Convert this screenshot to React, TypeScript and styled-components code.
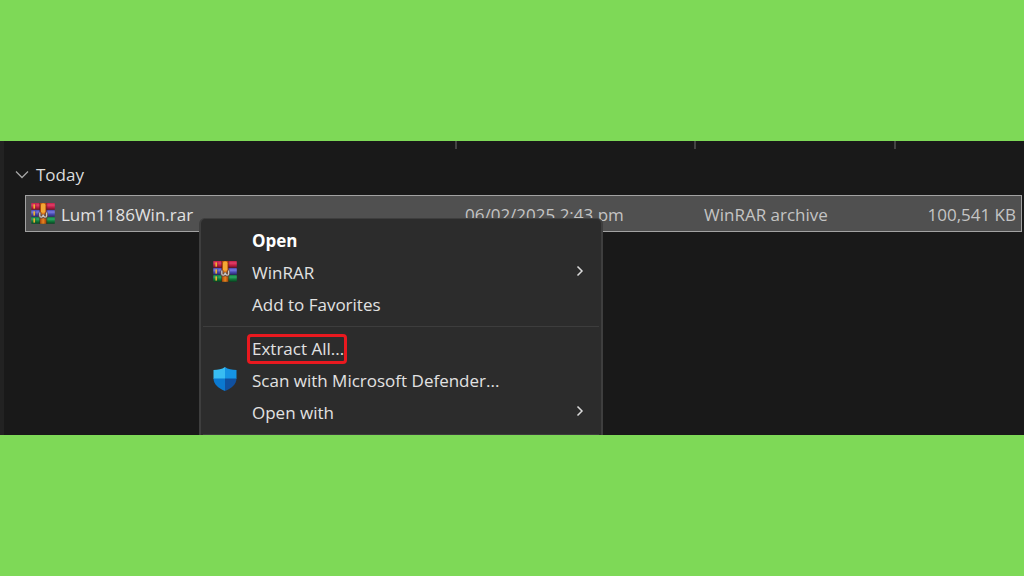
import React from 'react';
import styled, { createGlobalStyle } from 'styled-components';

const GlobalStyle = createGlobalStyle`
  * { box-sizing: border-box; }
  body {
    margin: 0;
    background: #7ed957;
    font-family: "Segoe UI", "Open Sans", "Noto Sans", sans-serif;
    font-size: 17px;
    line-height: 24px;
  }
`;

const Page = styled.main`
  min-height: 100vh;
  display: flex;
  flex-direction: column;
  justify-content: center;
`;

const Explorer = styled.section`
  background: #191919;
  border-left: 4px solid #222222;
  color: #d8d8d8;
  overflow: hidden;
`;

const FileTable = styled.table`
  display: block;
  width: 100%;

  thead, tbody { display: block; }
  th, td { padding: 0; font-weight: 400; text-align: left; white-space: nowrap; }
`;

const Columns = styled.tr`
  display: grid;
  grid-template-columns: minmax(0, 1fr) 239px 200px 130px;
`;

const HeaderCell = styled.th`
  height: 8px;

  & + & { border-left: 2px solid #434343; }
`;

const GroupRow = styled.tr`
  display: block;
  padding: 14px 0 8px 11px;
`;

const GroupCell = styled.th`
  display: block;
`;

const GroupToggle = styled.button`
  display: flex;
  align-items: center;
  gap: 7px;
  padding: 0;
  border: 0;
  background: none;
  color: #dcdcdc;
  font: inherit;
`;

const FileRow = styled(Columns)`
  height: 37px;
  margin: 0 2px 0 21px;
  border: 1px solid #a2a2a2;
  background: #505050;
  align-items: center;
  grid-template-columns: minmax(0, 1fr) 239px 199px 118px;
`;

const Cell = styled.td<{ $align?: 'right' }>`
  && {
    padding: 3px 5px 0 0;
    text-align: ${(p) => p.$align ?? 'left'};
  }
  color: #c4c4c4;
`;

const NameCell = styled(Cell)`
  display: flex;
  align-items: center;
  gap: 6px;
  && { padding-left: 5px; }
  color: #e2e2e2;
`;

const IconSlot = styled.span`
  display: block;
  padding-bottom: 4px;
`;

const Menu = styled.div`
  position: relative;
  width: 404px;
  margin: -14px 0 0 195px;
  padding: 6px 4px 0;
  border: 1px solid #3e3e3e;
  border-width: 1px 2px 0;
  border-radius: 6px 6px 0 0;
  background: #2c2c2c;
`;

const MenuItem = styled.button<{ $bold?: boolean }>`
  display: grid;
  grid-template-columns: 24px 1fr 10px;
  column-gap: 15px;
  align-items: center;
  width: 100%;
  height: 32px;
  padding: 0 12px 0 8px;
  border: 0;
  background: none;
  color: ${(p) => (p.$bold ? '#ffffff' : '#e2e2e2')};
  font: inherit;
  font-weight: ${(p) => (p.$bold ? 700 : 400)};
  text-align: left;
  white-space: nowrap;
`;

const Icon = styled.svg`
  display: block;
  flex: none;
`;

const Label = styled.span`
  justify-self: start;
`;

const Highlight = styled(Label)`
  margin: -3px -5px;
  padding: 0 0 0 2px;
  border: 3px solid #e9191f;
  border-radius: 4px;
`;

const Separator = styled.hr`
  height: 1px;
  margin: 5px -2px 6px;
  border: 0;
  background: #3d3d3d;

  &:last-child { margin-bottom: 0; }
`;

function ArchiveIcon({ id }: { id: string }) {
  const books = [
    { y: 0, light: '#e2406a', base: '#c41f48', dark: '#701029' },
    { y: 7, light: '#7a7be0', base: '#4a4bb4', dark: '#28286c' },
    { y: 14, light: '#2fa866', base: '#117d3c', dark: '#064520' },
  ];
  return (
    <Icon width="24" height="21" viewBox="0 0 24 21" aria-hidden="true">
      <defs>
        {books.map((b, i) => (
          <linearGradient key={b.y} id={`${id}-book${i}`} x1="0" y1="0" x2="0" y2="1">
            <stop offset="0" stopColor={b.base} />
            <stop offset="0.3" stopColor={b.light} />
            <stop offset="0.6" stopColor={b.base} />
            <stop offset="1" stopColor={b.dark} />
          </linearGradient>
        ))}
        <linearGradient id={`${id}-strap`} x1="0" y1="0" x2="1" y2="0">
          <stop offset="0" stopColor="#a8480c" />
          <stop offset="0.5" stopColor="#e88420" />
          <stop offset="1" stopColor="#a03c06" />
        </linearGradient>
      </defs>
      {books.map((b, i) => (
        <g key={b.y}>
          <rect x="0.3" y={b.y} width="23.5" height="6.8" rx="0.6" fill={`url(#${id}-book${i})`} />
          <rect x="2.4" y={b.y + 1.4} width="1.7" height="4.2" fill="#efb22c" />
          <rect x="4.4" y={b.y + 0.8} width="0.8" height="5.2" fill={b.dark} opacity="0.5" />
        </g>
      ))}
      <rect x="9" y="0" width="6.4" height="20.8" fill={`url(#${id}-strap)`} />
      <path d="M8.600 0v21M15.800 0v21" stroke="#4b1c16" strokeWidth="0.8" opacity="0.6" />
      <rect x="10" y="0.8" width="4.4" height="9" rx="1.4" fill="#f3a935" />
      <path d="M8.800 9.500v3.200q0 1.500 1.500 1.500t1.900-2.700q.4 2.700 1.900 2.700t1.500-1.500V9.500" fill="none" stroke="#5d4740" strokeWidth="2.800" />
      <path d="M8.800 9.500v3.200q0 1.500 1.500 1.500t1.900-2.700q.4 2.700 1.900 2.700t1.500-1.500V9.500" fill="none" stroke="#cbc5c0" strokeWidth="1.300" />
    </Icon>
  );
}

function ShieldIcon() {
  return (
    <Icon width="24" height="26" viewBox="0 0 24 26" aria-hidden="true">
      <path d="M12 1C9 3.200 5 4 .5 4v9H12z" fill="#38bdf2" />
      <path d="M12 1c3 2.200 7 3 11.500 3v9H12z" fill="#1594e4" />
      <path d="M.5 12.500c.3 6 5 10 11.500 12.500V12.500z" fill="#0b79d0" />
      <path d="M23.500 12.500c-.3 6-5 10-11.500 12.500V12.500z" fill="#10509f" />
    </Icon>
  );
}

function SubmenuArrow() {
  return (
    <Icon width="10" height="12" viewBox="0 0 10 12" aria-hidden="true">
      <path d="M2.500 1.500 7 6l-4.500 4.500" fill="none" stroke="#dadada" strokeWidth="1.500" />
    </Icon>
  );
}

type Entry = {
  label: string;
  icon?: React.ReactNode;
  bold?: boolean;
  submenu?: boolean;
  highlighted?: boolean;
};

const groups: Entry[][] = [
  [
    { label: 'Open', bold: true },
    { label: 'WinRAR', icon: <ArchiveIcon id="menu" />, submenu: true },
    { label: 'Add to Favorites' },
  ],
  [
    { label: 'Extract All...', highlighted: true },
    { label: 'Scan with Microsoft Defender...', icon: <ShieldIcon /> },
    { label: 'Open with', submenu: true },
  ],
];

export default function App() {
  return (
    <Page>
      <GlobalStyle />
      <Explorer>
        <FileTable>
          <thead>
            <Columns>
              <HeaderCell />
              <HeaderCell />
              <HeaderCell />
              <HeaderCell />
            </Columns>
          </thead>
          <tbody>
            <GroupRow>
              <GroupCell colSpan={4}>
                <GroupToggle type="button">
                  <Icon width="14" height="10" viewBox="0 0 14 10" aria-hidden="true">
                    <path d="M1 1.500 7 7.500l6-6" fill="none" stroke="#a5a5a5" strokeWidth="1.300" />
                  </Icon>
                  Today
                </GroupToggle>
              </GroupCell>
            </GroupRow>
            <FileRow>
              <NameCell>
                <IconSlot>
                  <ArchiveIcon id="file" />
                </IconSlot>
                Lum1186Win.rar
              </NameCell>
              <Cell>06/02/2025 2:43 pm</Cell>
              <Cell>WinRAR archive</Cell>
              <Cell $align="right">100,541 KB</Cell>
            </FileRow>
          </tbody>
        </FileTable>
        <Menu role="menu">
          {groups.map((group) => (
            <React.Fragment key={group[0].label}>
              {group.map((entry) => (
                <MenuItem key={entry.label} type="button" role="menuitem" $bold={entry.bold}>
                  <IconSlot>{entry.icon}</IconSlot>
                  {entry.highlighted ? <Highlight>{entry.label}</Highlight> : <Label>{entry.label}</Label>}
                  {entry.submenu && (
                    <IconSlot>
                      <SubmenuArrow />
                    </IconSlot>
                  )}
                </MenuItem>
              ))}
              <Separator />
            </React.Fragment>
          ))}
        </Menu>
      </Explorer>
    </Page>
  );
}
